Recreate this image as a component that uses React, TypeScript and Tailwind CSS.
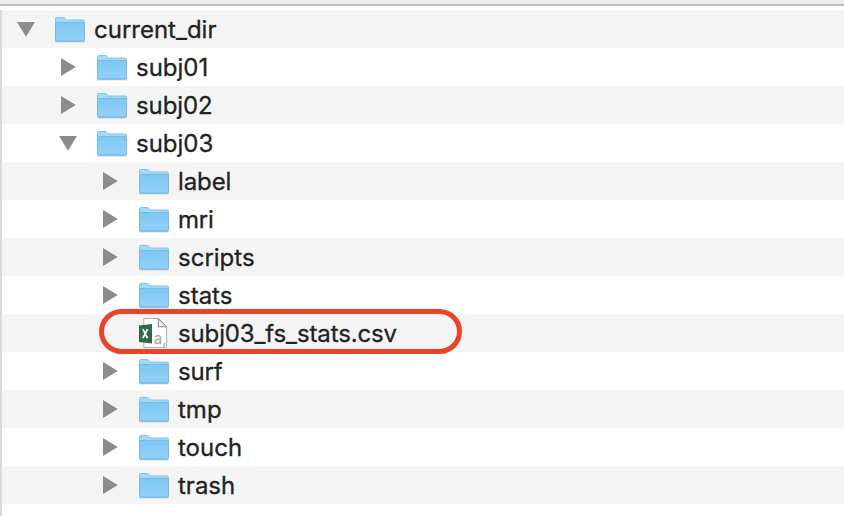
type Item = { name: string; depth: 0 | 1 | 2; kind: 'open' | 'closed' | 'file'; tracking?: string };

const items: Item[] = [
  { name: 'current_dir', depth: 0, kind: 'open' },
  { name: 'subj01', depth: 1, kind: 'closed' },
  { name: 'subj02', depth: 1, kind: 'closed', tracking: 'tracking-[-0.1px]' },
  { name: 'subj03', depth: 1, kind: 'open' },
  { name: 'label', depth: 2, kind: 'closed', tracking: 'tracking-[-0.1px]' },
  { name: 'mri', depth: 2, kind: 'closed', tracking: 'tracking-[-0.2px]' },
  { name: 'scripts', depth: 2, kind: 'closed' },
  { name: 'stats', depth: 2, kind: 'closed' },
  { name: 'subj03_fs_stats.csv', depth: 2, kind: 'file', tracking: 'tracking-[-0.13px]' },
  { name: 'surf', depth: 2, kind: 'closed', tracking: 'tracking-[-0.2px]' },
  { name: 'tmp', depth: 2, kind: 'closed' },
  { name: 'touch', depth: 2, kind: 'closed' },
  { name: 'trash', depth: 2, kind: 'closed' },
];

const indents = ['pl-[13px]', 'pl-[55px]', 'pl-[97px]'];

function Disclosure({ open }: { open: boolean }) {
  return (
    <svg width="24" height="38" viewBox="0 0 24 38" className="shrink-0" fill="#8c8c8c">
      {open ? <path d="M2 12H20L11 26.8Z" /> : <path d="M4 10L18.8 19L4 28Z" />}
    </svg>
  );
}

function Folder() {
  return (
    <svg width="32" height="38" viewBox="0 0 32 38" className="shrink-0">
      <defs>
        <linearGradient id="front" x1="0" y1="0" x2="0" y2="1">
          <stop offset="0" stopColor="#7fc8f3" />
          <stop offset="1" stopColor="#93d0f8" />
        </linearGradient>
      </defs>
      <path d="M1 31.5H31V32Q31 32.6 30 32.6H2Q1 32.6 1 32Z" fill="#000" opacity=".16" />
      <path d="M1.5 30V8.7Q1.5 7.5 2.7 7.5H9.2Q10.1 7.5 10.8 8.3L11.7 9.4Q12.2 10 13.1 10H29.2Q30.5 10 30.5 11.3V30Q30.5 31.4 29.2 31.4H2.8Q1.5 31.4 1.5 30Z" fill="#a1d9f8" stroke="#83c2e8" />
      <path d="M1.5 12.5H30.5V29.4Q30.5 30.8 29.2 30.8H2.8Q1.5 30.8 1.5 29.4Z" fill="url(#front)" stroke="#76b9e2" />
    </svg>
  );
}

function CsvFile() {
  return (
    <svg width="32" height="38" viewBox="0 0 32 38" className="shrink-0">
      <path d="M5.8 4.5H20.5L28.6 12.7V33.5H5.8Z" fill="#fff" stroke="#b0b0b0" />
      <path d="M20.3 4.7V12.8H28.4Z" fill="#f0f0f0" stroke="#858585" strokeWidth="1" />
      <path d="M1 11.6L14 10V29.6L1 28Z" fill="#2b6c47" />
      <path d="M4.9 15.2L9.5 24.2M9.5 15.2L4.9 24.2" stroke="#fff" strokeWidth="1.8" />
      <text x="15.8" y="29.5" fontSize="15" fill="#a6a6a6" className="font-['Inter',sans-serif]">a,</text>
    </svg>
  );
}

export default function App() {
  return (
    <main className="relative h-[516px] w-[844px] overflow-hidden bg-white font-['Inter',sans-serif] text-[#222]">
      <div className="h-1 bg-[#ededed]" />
      <div className="h-0.5 bg-[#bcbabb]" />
      <div className="h-1 bg-white" />
      <ul className="border-l-2 border-[#ddd8da]">
        {items.map((item) => (
          <li key={item.name} className={`flex h-[38px] items-center odd:bg-[#f4f4f4] even:bg-white ${indents[item.depth]}`}>
            {item.kind === 'file' ? <span className="w-6 shrink-0" /> : <Disclosure open={item.kind === 'open'} />}
            <span className="ml-[15px] flex">{item.kind === 'file' ? <CsvFile /> : <Folder />}</span>
            <span className={`ml-2 whitespace-nowrap pt-0.5 text-[24px] leading-[38px] [-webkit-text-stroke:0.3px_#222] ${item.tracking ?? ''}`}>{item.name}</span>
          </li>
        ))}
        <li className="h-4 bg-white" />
      </ul>
      <div className="absolute left-[99px] top-[309px] h-[45px] w-[363px] rounded-full border-[5px] border-[#e94429]" />
    </main>
  );
}
